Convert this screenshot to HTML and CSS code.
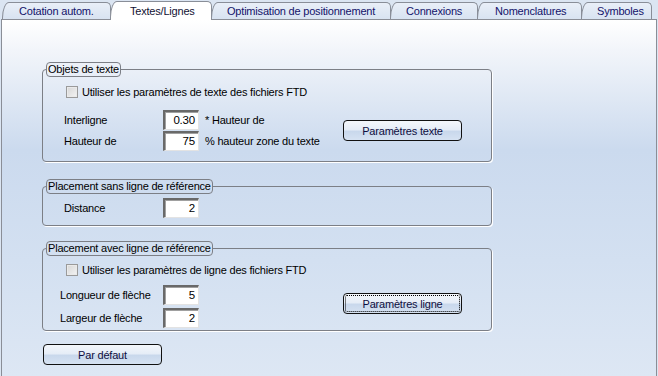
FILE: index.html
```html
<!DOCTYPE html>
<html lang="fr">
<head>
<meta charset="utf-8">
<title>Textes/Lignes</title>
<link rel="stylesheet" href="styles.css">
</head>
<body>
<div class="window">
  <div class="tabs">
    <div class="tab t1">Cotation autom.</div>
    <div class="tab t2 active">Textes/Lignes</div>
    <div class="tab t3">Optimisation de positionnement</div>
    <div class="tab t4">Connexions</div>
    <div class="tab t5">Nomenclatures</div>
    <div class="tab t6">Symboles</div>
  </div>
  <div class="panel">
    <fieldset class="group g1">
      <legend>Objets de texte</legend>
      <div class="body">
        <label class="check"><span class="box"></span>Utiliser les paramètres de texte des fichiers FTD</label>
        <div class="fields">
          <div class="rows">
            <div class="row"><span class="lbl">Interligne</span><span class="input">0.30</span><span class="hint">* Hauteur de</span></div>
            <div class="row"><span class="lbl">Hauteur de</span><span class="input">75</span><span class="hint">% hauteur zone du texte</span></div>
          </div>
          <button class="btn">Paramètres texte</button>
        </div>
      </div>
    </fieldset>
    <fieldset class="group g2">
      <legend>Placement sans ligne de référence</legend>
      <div class="body">
        <div class="row"><span class="lbl">Distance</span><span class="input">2</span></div>
      </div>
    </fieldset>
    <fieldset class="group g3">
      <legend>Placement avec ligne de référence</legend>
      <div class="body">
        <label class="check"><span class="box"></span>Utiliser les paramètres de ligne des fichiers FTD</label>
        <div class="fields">
          <div class="rows wide">
            <div class="row"><span class="lbl">Longueur de flèche</span><span class="input">5</span></div>
            <div class="row"><span class="lbl">Largeur de flèche</span><span class="input">2</span></div>
          </div>
          <button class="btn focus">Paramètres ligne</button>
        </div>
      </div>
    </fieldset>
    <button class="btn default">Par défaut</button>
  </div>
</div>
</body>
</html>
```

FILE: styles.css
```css
* { box-sizing: border-box; }
html, body { margin: 0; padding: 0; }
body {
  width: 658px;
  height: 376px;
  overflow: hidden;
  background: #dbe5f2;
  font-family: "Liberation Sans", Arial, sans-serif;
  font-size: 11px;
  letter-spacing: -0.2px;
  color: #000;
}
.window {
  display: flex;
  flex-direction: column;
  height: 376px;
}
.tabs {
  display: flex;
  align-items: flex-end;
  height: 19px;
  padding-left: 2px;
  position: relative;
  z-index: 1;
}
.tab {
  height: 17px;
  line-height: 16px;
  padding-left: 14px;
  border: 1px solid #898e98;
  border-bottom: none;
  border-radius: 7px 5px 0 0 / 16px 5px 0 0;
  background: linear-gradient(#e9eff8, #d8e3f1);
  color: #12126a;
  font-size: 11px;
  white-space: nowrap;
  margin-right: -1px;
}
.tab.active {
  height: 19px;
  background: #fff;
  color: #111133;
  position: relative;
  z-index: 2;
  margin-bottom: -1px;
  line-height: 18px;
}
.t1 { width: 109px; padding-left: 16px; }
.t2 { width: 102px; padding-left: 19px; }
.t3 { width: 180px; padding-left: 15px; }
.t4 { width: 88px; padding-left: 15px; }
.t5 { width: 105px; padding-left: 17px; }
.t6 { width: 71px; padding-left: 15px; }
.panel {
  flex: 1;
  margin: 0 1px 0 1px;
  border: 1px solid #8a8e97;
  border-bottom: none;
  background: linear-gradient(#ffffff 0px, #f2f5fa 30px, #cbdaee 130px, #d3e0f1 240px, #dde7f4 357px);
  display: flex;
  flex-direction: column;
  align-items: flex-start;
  padding: 42px 0 0 40px;
}
.group {
  width: 450px;
  margin: 0;
  padding: 0;
  border: 1px solid #7c7f86;
  border-radius: 4px;
  box-shadow: 1px 1px 0 #ffffff;
  min-inline-size: 0;
}
.group legend {
  margin-left: 3px;
  padding: 0 1px;
  border: 1px solid #7c7f86;
  border-radius: 4px;
  line-height: 13px;
  font-size: 11px;
}
.g1 .body { padding: 7px 29px 10px 21px; }
.g2 { margin-top: 17px; }
.g2 .body { padding: 4px 0 7px 21px; }
.g3 { margin-top: 15px; }
.g3 .body { padding: 6px 29px 2px 21px; }
.g3 .fields { margin-top: 7px; }
.check {
  display: flex;
  align-items: center;
  height: 16px;
  font-size: 11px;
}
.box {
  width: 12px;
  height: 12px;
  border: 1px solid #9a9a9a;
  background: linear-gradient(135deg, #d6d6d6, #f4f4f4);
  margin: 0 4px 0 2px;
  box-shadow: inset 0 0 0 1px #eaeaea;
}
.fields {
  display: flex;
  align-items: center;
  justify-content: space-between;
  margin-top: 10px;
}
.rows {
  display: flex;
  flex-direction: column;
  gap: 1px;
}
.rows.wide { gap: 3px; }
.row {
  display: flex;
  align-items: center;
  height: 20px;
  font-size: 11px;
}
.lbl { width: 99px; }
.wide .lbl { width: 103px; margin-left: -4px; }
.input {
  width: 36px;
  height: 20px;
  background: #fff;
  text-align: right;
  padding: 0 3px 0 0;
  line-height: 17px;
  border-style: solid;
  border-width: 2px 1px 1px 2px;
  border-color: #696969 #e3e3e3 #e3e3e3 #696969;
  box-shadow: inset 1px 1px 0 #a0a0a0;
  font-size: 11.5px;
}
.hint { margin-left: 6px; }
.btn {
  width: 119px;
  height: 21px;
  padding: 0;
  border: 1px solid #111;
  border-radius: 4px;
  background: linear-gradient(#f4f7fb 0%, #e6edf7 45%, #c9d8ec 55%, #d6e2f2 100%);
  font-family: "Liberation Sans", Arial, sans-serif;
  font-size: 11px;
  letter-spacing: -0.2px;
  color: #0e0e40;
  cursor: default;
}
.btn.focus {
  outline: 1px dotted #000;
  outline-offset: -3px;
  margin-bottom: 6px;
}
.btn.default { margin-top: 13px; margin-left: 1px; }
```
